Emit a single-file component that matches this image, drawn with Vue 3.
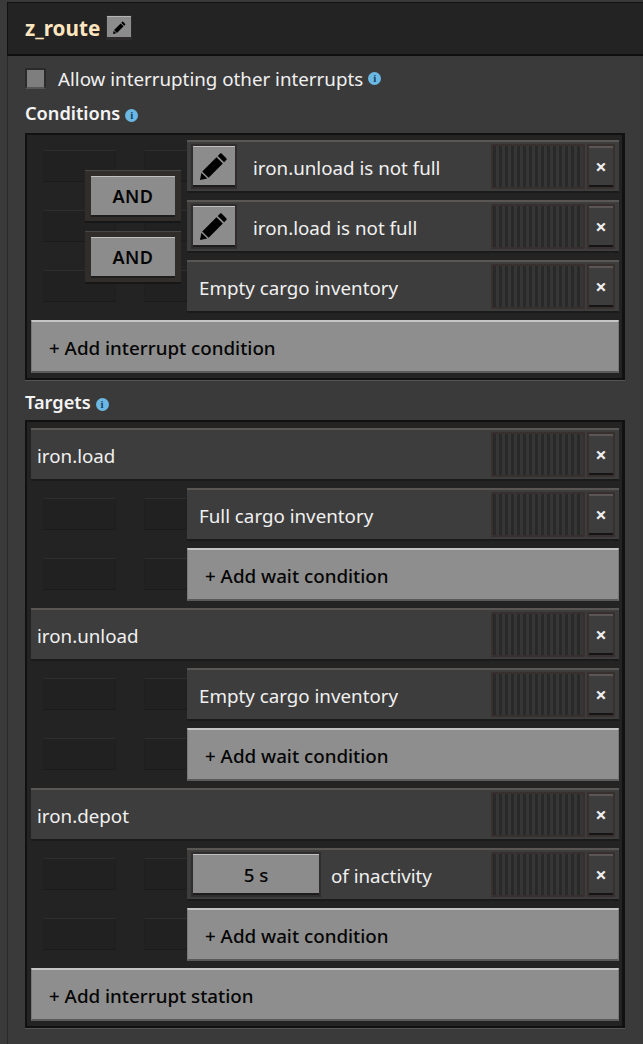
<script setup>
const conditions = [
  { text: 'iron.unload is not full', edit: true },
  { text: 'iron.load is not full', edit: true },
  { text: 'Empty cargo inventory', edit: false },
]
const targets = [
  { name: 'iron.load', wait: 'Full cargo inventory' },
  { name: 'iron.unload', wait: 'Empty cargo inventory' },
  { name: 'iron.depot', wait: 'of inactivity', time: '5 s' },
]
const pencil = 'M20.2 1.6l4.2 4.2c.5.5.5 1.2 0 1.7l-2 2-5.9-5.9 2-2c.5-.5 1.2-.5 1.7 0zM15.3 4.8l5.9 5.9L8 23.9 2.1 18zM1.3 19.3l5.4 5.4-6.7 1.300z'
</script>

<template>
  <div class="page">
    <header class="title">
      <span class="title-text">z_route</span>
      <button class="rename">
        <svg viewBox="0 0 26 26" class="rename-icon"><path :d="pencil" /></svg>
      </button>
    </header>
    <main class="body">
      <label class="allow">
        <span class="check"></span>
        <span>Allow interrupting other interrupts</span>
        <i class="info">i</i>
      </label>
      <h2 class="head">Conditions<i class="info">i</i></h2>
      <section class="frame frame-cond">
        <div class="ghosts">
          <template v-for="n in 3" :key="n">
            <span class="ghost"></span><span class="ghost ghost-b"></span>
          </template>
        </div>
        <div class="and and-1"><span class="and-btn">AND</span></div>
        <div class="and and-2"><span class="and-btn">AND</span></div>
        <div v-for="c in conditions" :key="c.text" class="row row-sub">
          <button v-if="c.edit" class="edit">
            <svg viewBox="0 0 26 26" class="edit-icon"><path :d="pencil" /></svg>
          </button>
          <span class="row-text" :class="{ 'row-text-edit': c.edit }">{{ c.text }}</span>
          <span class="grip"></span>
          <button class="close">×</button>
        </div>
        <button class="add add-wide">+ Add interrupt condition</button>
      </section>
      <h2 class="head head-targets">Targets<i class="info">i</i></h2>
      <section class="frame frame-targets">
        <template v-for="t in targets" :key="t.name">
          <div class="row row-wide">
            <span class="row-text row-text-name">{{ t.name }}</span>
            <span class="grip"></span>
            <button class="close">×</button>
          </div>
          <div class="sub">
            <span class="ghost ghost-1"></span><span class="ghost ghost-b ghost-2"></span>
            <span class="ghost ghost-3"></span><span class="ghost ghost-b ghost-4"></span>
            <div class="row row-sub">
              <button v-if="t.time" class="time">{{ t.time }}</button>
              <span class="row-text" :class="{ 'row-text-time': t.time }">{{ t.wait }}</span>
              <span class="grip"></span>
              <button class="close">×</button>
            </div>
            <button class="add add-sub">+ Add wait condition</button>
          </div>
        </template>
        <button class="add add-wide">+ Add interrupt station</button>
      </section>
    </main>
  </div>
</template>

<style>
html, body { margin: 0; background: #3a3a3a; }
</style>

<style scoped>
.page {
  width: 643px;
  height: 1044px;
  overflow: hidden;
  background: #3b3a3a;
  font-family: "Noto Sans", sans-serif;
  color: #f0f0f0;
  box-sizing: border-box;
  padding-left: 7px;
  position: relative;
}
button { font-family: inherit; padding: 0; margin: 0; border: 0; }
.title {
  margin-top: 2px;
  background: #242323;
  border-top: 1px solid #111;
  border-left: 1px solid #111;
  border-bottom: 2px solid #0f0f0f;
  display: flex;
  align-items: center;
  padding: 0 0 2px 17px;
  gap: 7px;
  box-sizing: border-box;
  height: 54px;
}
.title-text { color: #ffe6c0; font-size: 20.7px; font-weight: 700; }
.rename {
  width: 24px;
  height: 23px;
  background: #8c8c8c;
  border-top: 1px solid #b5b5b5;
  border-bottom: 2px solid #2c2a2a;
  box-shadow: 0 0 0 1px #2c2a2a;
  display: flex;
  align-items: center;
  justify-content: center;
  box-sizing: border-box;
}
.rename-icon { width: 13px; height: 13px; }
.body {
  border-left: 1px solid #2a2a2a;
  padding: 0 0 0 17px;
  height: 988px;
  box-sizing: border-box;
  position: relative;
}
.allow { display: flex; align-items: center; height: 45px; font-size: 18.75px; }
.check {
  width: 21px;
  height: 21px;
  box-sizing: border-box;
  background: #7e7e7e;
  border: 2px solid #2c2a2a;
  border-bottom-color: #585655;
  margin-right: 12px;
}
.info {
  display: inline-flex;
  align-items: center;
  justify-content: center;
  width: 13px;
  height: 13px;
  margin-left: 5px;
  border-radius: 50%;
  background: #6cb8e4;
  color: #17425f;
  font: 700 11px/13px "Liberation Serif", serif;
  vertical-align: 1px;
}
.head { margin: 0; font-size: 18.2px; line-height: 24px; font-weight: 600; height: 32px; color: #f4f4f4; }
.head-targets { height: 30px; margin-top: 10px; }
.frame {
  position: relative;
  width: 600px;
  box-sizing: border-box;
  background: #242323;
  border: 2px solid #111;
  border-right-width: 3px;
  padding: 5px 0 0 4px;
  box-shadow: 0 1px 0 #555;
}
.frame-cond { height: 247px; }
.frame-targets { height: 608px; padding-top: 6px; }
.ghosts {
  position: absolute;
  left: 16px;
  top: 15px;
  display: grid;
  grid-template-columns: 73px 43px;
  column-gap: 28px;
  row-gap: 28px;
}
.ghost {
  display: block;
  width: 73px;
  height: 32px;
  box-sizing: border-box;
  background: #222121;
  border-top: 1px solid #2f2d2d;
  border-left: 1px solid #201f1f;
  border-right: 1px solid #201f1f;
  border-bottom: 1px solid #1b1b1b;
}
.ghost-b { width: 43px; }
.and {
  position: absolute;
  left: 58px;
  width: 96px;
  height: 53px;
  box-sizing: border-box;
  padding: 5px 6px;
  background: #312d2b;
  border-top: 1px solid #4a4644;
  border-bottom: 2px solid #171717;
  z-index: 1;
}
.and-1 { top: 35px; }
.and-2 { top: 96px; }
.and-btn {
  display: block;
  height: 41px;
  line-height: 39px;
  text-align: center;
  background: #8c8c8c;
  color: #050505;
  border-top: 1px solid #c0c0c0;
  border-bottom: 2px solid #1d1d1d;
  box-sizing: border-box;
  font-size: 18px;
  font-weight: 600;
  letter-spacing: .5px;
}
.row {
  box-sizing: border-box;
  height: 53px;
  display: flex;
  align-items: center;
  background: #3e3d3d;
  border-top: 2px solid #5a5654;
  border-bottom: 2px solid #1b1b1b;
  margin-bottom: 7px;
  position: relative;
}
.row-sub { margin-left: 156px; width: 432px; }
.row-wide { width: 588px; }
.row-text { font-size: 18.75px; padding: 2px 0 0 12px; flex: 1; color: #f0f0f0; }
.row-text-edit { padding-left: 18px; }
.row-text-name { padding-left: 6px; }
.row-text-time { padding-left: 12px; }
.edit {
  margin-left: 6px;
  width: 42px;
  height: 41px;
  background: #8c8c8c;
  border-top: 1px solid #c0c0c0;
  border-bottom: 2px solid #1d1d1d;
  box-sizing: border-box;
  display: flex;
  align-items: center;
  justify-content: center;
  box-shadow: 0 0 0 2px #312d2c;
}
.edit-icon { width: 28px; height: 28px; }
.time {
  margin-left: 6px;
  width: 126px;
  height: 41px;
  background: #8c8c8c;
  border-top: 1px solid #c0c0c0;
  border-bottom: 2px solid #1d1d1d;
  box-sizing: border-box;
  color: #050505;
  font-size: 18.75px;
  font-weight: 500;
  box-shadow: 0 0 0 2px #312d2c;
}
.grip {
  width: 90px;
  height: 41px;
  background: repeating-linear-gradient(90deg, #2a2929 0 3px, #373636 3.5px 5.5px, #2a2929 6px);
  box-shadow: 0 0 0 2px #37302e;
}
.close {
  width: 24px;
  height: 41px;
  margin: 0 6px;
  background: #3e3d3d;
  color: #eee;
  border-top: 2px solid #5a5654;
  border-bottom: 2px solid #151515;
  box-sizing: border-box;
  box-shadow: 0 0 0 2px #37302e;
  font-size: 20px;
  font-weight: 700;
  line-height: 30px;
}
.add {
  display: block;
  height: 53px;
  box-sizing: border-box;
  background: #8e8e8e;
  color: #050505;
  border-top: 2px solid #c4c4c4;
  border-bottom: 2px solid #5a5a5a;
  border-left: 1px solid #777;
  border-right: 1px solid #777;
  font-size: 18.75px;
  font-weight: 500;
  text-align: left;
  padding-top: 2px;
}
.add-wide { width: 588px; padding-left: 17px; }
.add-sub { position: absolute; left: 156px; top: 60px; width: 432px; padding-left: 17px; }
.sub { position: relative; height: 120px; }
.sub .row { position: absolute; left: 0; top: 0; margin-bottom: 0; margin-left: 156px; }
.sub .ghost { position: absolute; }
.ghost-1 { left: 12px; top: 10px; }
.ghost-2 { left: 113px; top: 10px; }
.ghost-3 { left: 12px; top: 70px; }
.ghost-4 { left: 113px; top: 70px; }
</style>
